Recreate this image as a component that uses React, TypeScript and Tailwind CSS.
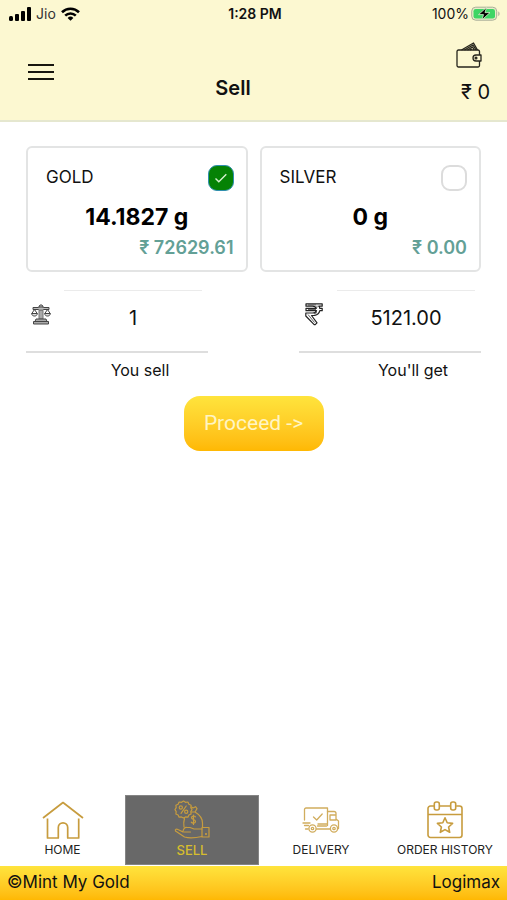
import type { ReactNode } from 'react';
import { useState } from 'react';

function SignalIcon() {
  return (
    <svg width="22" height="14" viewBox="0 0 22 14" aria-hidden="true">
      <rect x="0" y="9" width="4" height="5" rx="1.500" />
      <rect x="6" y="7" width="4" height="7" rx="1" />
      <rect x="12" y="4" width="4" height="10" rx="1" />
      <rect x="18" y="0" width="4" height="14" rx="1" />
    </svg>
  );
}

function WifiIcon() {
  return (
    <svg width="19" height="14" viewBox="0 0 19 14" fill="none" stroke="#000" strokeWidth="2.6" aria-hidden="true">
      <path d="M1 5.2a12.2 12.2 0 0 1 17 0" />
      <path d="M4.2 8.6a7.6 7.6 0 0 1 10.6 0" />
      <path d="M9.500 13.800l-2.900-2.900a4.200 4.200 0 0 1 5.800 0z" fill="#000" stroke="none" />
    </svg>
  );
}

function BatteryIcon() {
  return (
    <svg width="30" height="16" viewBox="0 0 30 16" aria-hidden="true">
      <rect x="0.700" y="1.200" width="25" height="13" rx="4" fill="#e9edc8" stroke="#a9ad98" />
      <rect x="2.500" y="3" width="21.500" height="9.500" rx="2.200" fill="#3ed565" />
      <path d="M27.300 5.600c1.600.5 1.600 4 0 4.500z" fill="#a9ad98" />
      <path d="M15.500 1.500L7.500 8.600h5l-1.500 5.200 8-7.200h-5z" fill="#000" stroke="#d9f5cf" strokeWidth="0.800" />
    </svg>
  );
}

function WalletIcon() {
  return (
    <svg width="26" height="27" viewBox="0 0 26 27" fill="none" stroke="#26251c" strokeWidth="1.300" strokeLinejoin="round" aria-hidden="true">
      <path d="M23.500 13V9.500a1.500 1.500 0 0 0-1.500-1.500H2.500A1.500 1.500 0 0 0 1 9.500v14A1.500 1.500 0 0 0 2.500 25H22a1.500 1.500 0 0 0 1.500-1.500V19" />
      <path d="M25 13h-5a3 3 0 0 0 0 6h5z" />
      <circle cx="20" cy="16" r="0.900" />
      <path d="M5.500 8L17.500 1l4 7M8.500 8l8.500-5 3 5M11.500 8l5-3 1.700 3M14 8l2-1" />
    </svg>
  );
}

function ScalesIcon() {
  return (
    <svg width="20" height="21" viewBox="0 0 20 21" fill="none" stroke="#444" strokeWidth="1" strokeLinejoin="round" aria-hidden="true">
      <path d="M8 3.500V2l2-1.300L12 2v1.500M2 3.500h5.500l1-.5h3l1 .5H18v2h-5.500l-.5.800H8l-.5-.800H2z" fill="#bbb" />
      <path d="M8 6.300h4V15H8z" fill="#aaa" stroke="#777" />
      <path d="M3.500 5.500L.8 9.500h5.400zM16.500 5.500l-2.700 4h5.400z" />
      <path d="M.7 9.500h5.600c0 3.400-5.600 3.400-5.600 0zM13.700 9.500h5.600c0 3.400-5.600 3.400-5.600 0z" fill="#ddd" />
      <path d="M5 15h10l1 2.500H4zM2.500 17.500h15V20h-15z" fill="#aaa" />
    </svg>
  );
}

function RupeeIcon() {
  return (
    <svg width="20" height="23" viewBox="0 0 20 23" fill="none" stroke="#222" strokeWidth="1.200" strokeLinejoin="round" aria-hidden="true">
      <path d="M2 .8H18.200v2.400h-3.500c.6.600 1 1.400 1.100 2.100h2.400v2.400h-2.400c-.5 2.500-2.300 4.200-5 4.600l-3.300.2 5.500 7.300-1.800 1.900h-1L1.800 13v-3H8.500c2 0 3.400-.8 4-2.300H2V5.300h10.300c-.5-1.400-1.800-2.100-3.800-2.100H2z" />
      <path d="M4 2h8M4 6.500h8M13 2.500v2M4 11.500l6.500 8M10 11l3-1.500" strokeWidth="0.700" />
    </svg>
  );
}

function HomeIcon() {
  return (
    <svg width="42" height="38" viewBox="0 0 42 38" fill="none" stroke="#c79c3e" strokeWidth="1.700" strokeLinejoin="round" aria-hidden="true">
      <path d="M1 17L21 1.500 41 17" />
      <path d="M5.500 17.500V37h10.800V26.500a4.700 4.700 0 0 1 9.400 0V37h11V17.500" />
    </svg>
  );
}

function SellIcon() {
  return (
    <svg width="36" height="40" viewBox="0 0 36 40" fill="none" stroke="#c79c3e" strokeWidth="1.200" strokeLinejoin="round" strokeLinecap="round" aria-hidden="true">
      <path d="M9.500 1l2 1.300 2.400-.3 1 2.200 2.200 1-.3 2.400L18 9.600l-1.200 2 .3 2.400-2.200 1-1 2.200-2.400-.3-2 1.200-2-1.200-2.400.3-1-2.200-2.200-1 .3-2.400L1 9.600l1.200-2-.3-2.400 2.200-1 1-2.200 2.400.3z" />
      <circle cx="6.800" cy="7.500" r="1.600" />
      <circle cx="12.200" cy="11.800" r="1.600" />
      <path d="M12.200 6l-5.200 7.300" />
      <path d="M17.500 7l1.500 1 2.500-1.300 1.500 2-2 3.300h-3.500M21 12c5 3 7.500 6.500 7.500 11v4M10.500 18.500c-1 3-1 5.500-.5 8.500" />
      <path d="M21.500 16.800c-1-1.300-4-1-4 1s4 1.500 4 3.600-3.200 2.300-4.200.8M19.500 15v9.500" />
      <path d="M28 29h-8l-4-1.500h-3c-2.500-.5-4 2-4 4.500l-5-2.500c-1.500-.8-3.200-.5-2.500 1.500L10.500 37c3.500 1 10.500 1 17.500-.5" />
      <path d="M10 32h6.500M28 27.500h7V37h-7z" />
      <circle cx="32" cy="34" r="0.500" />
    </svg>
  );
}

function DeliveryIcon() {
  return (
    <svg width="38" height="26" viewBox="0 0 38 26" fill="none" stroke="#d1ad5e" strokeWidth="1.300" strokeLinejoin="round" strokeLinecap="round" aria-hidden="true">
      <path d="M2.500 13V2.500A1.500 1.500 0 0 1 4 1h21.500v14" />
      <path d="M11.500 10l3.200 3 5.500-6" />
      <path d="M25.500 4.500H32a2 2 0 0 1 2 2v5.500l2.500 2v7.500h-1M28 8h6v5h-6zM25.500 15v3.500" />
      <path d="M1 16h7M2.500 18.500h4M3.500 22H6M14.500 22H28M15.500 19h9M16 17h9" />
      <circle cx="10.500" cy="21.500" r="3.600" />
      <circle cx="10.500" cy="21.500" r="1.200" />
      <circle cx="32" cy="21.500" r="3.600" />
      <circle cx="32" cy="21.500" r="1.200" />
    </svg>
  );
}

function OrderIcon() {
  return (
    <svg width="36" height="38" viewBox="0 0 36 38" fill="none" stroke="#c79c3e" strokeWidth="1.600" strokeLinejoin="round" aria-hidden="true">
      <path d="M7.300 5H3.500A2.500 2.500 0 0 0 1 7.500V34a2.500 2.500 0 0 0 2.500 2.500h29A2.500 2.500 0 0 0 35 34V7.500A2.500 2.500 0 0 0 32.500 5h-3.300M12.300 5h11.400M1 13.500h34" />
      <rect x="7.300" y="1" width="5" height="8" rx="2" />
      <rect x="23.700" y="1" width="5" height="8" rx="2" />
      <path d="M18 16.800l2.200 5 5.400.6-4 3.600 1.100 5.300-4.700-2.700-4.700 2.700 1.100-5.300-4-3.600 5.400-.6z" />
    </svg>
  );
}

type MetalCardProps = {
  id: string;
  name: string;
  weight: string;
  value: string;
  checked: boolean;
  onSelect: () => void;
};

function MetalCard({ id, name, weight, value, checked, onSelect }: MetalCardProps) {
  return (
    <section className="h-[126px] flex-1 rounded-md border-2 border-[#e3e4e4] pt-[17px] pr-3 pl-[18px]">
      <div className="flex items-start justify-between">
        <label htmlFor={id} className="text-[17px] leading-6">{name}</label>
        <span className="relative flex size-[26px]">
          <input
            id={id}
            type="checkbox"
            checked={checked}
            onChange={onSelect}
            className="size-[26px] appearance-none rounded-[9px] border-2 border-[#dcdcdc] bg-white checked:border checked:border-[#2f8fae] checked:bg-[#058205]"
          />
          {checked && (
            <svg className="pointer-events-none absolute inset-0" width="26" height="26" viewBox="0 0 26 26" fill="none" stroke="#d5f0d0" strokeWidth="1.400" aria-hidden="true">
              <path d="M7.500 13.500l3.300 3.300 7.500-7.600" />
            </svg>
          )}
        </span>
      </div>
      <p className="mt-3 pr-1.5 text-center text-[23px] leading-7 font-bold text-black">{weight}</p>
      <p className="mt-[5px] text-right text-lg leading-6 font-semibold text-[#63a096]">{value}</p>
    </section>
  );
}

type FieldProps = { id: string; icon: ReactNode; initial: string; label: string };

function Field({ id, icon, initial, label }: FieldProps) {
  return (
    <div className="w-2/5">
      <div className="flex border-b-2 border-[#dedede] pr-1.5">
        <span className="flex w-[38px] shrink-0 items-center pb-3 pl-[5px]">{icon}</span>
        <input
          id={id}
          defaultValue={initial}
          inputMode="decimal"
          className="h-[61px] w-full min-w-0 border-t border-[#ebebeb] pb-1.5 text-center text-xl outline-none"
        />
      </div>
      <label htmlFor={id} className="mt-[5px] block pl-[46px] text-center text-base leading-6">{label}</label>
    </div>
  );
}

type TabProps = { icon: ReactNode; label: string; active?: boolean };

function Tab({ icon, label, active = false }: TabProps) {
  return (
    <a
      href="#"
      aria-current={active ? 'page' : undefined}
      className={
        active
          ? 'flex h-[70px] flex-col items-center border border-[#858585] bg-[#686868] text-[13px] leading-5 font-medium text-[#d6bd2e]'
          : 'flex h-[70px] flex-col items-center border border-transparent text-xs leading-5 text-[#222]'
      }
    >
      <span className="flex h-12 items-center">{icon}</span>
      <span className="-mt-1 whitespace-nowrap">{label}</span>
    </a>
  );
}

export default function App() {
  const [metal, setMetal] = useState('gold');

  return (
    <div className="flex min-h-screen flex-col bg-white font-['Inter',sans-serif] text-[#111]">
      <header className="border-b-2 border-[#e5e7cf] bg-[#fcf8d1]">
        <div className="grid h-7 grid-cols-[1fr_auto_1fr] items-center pr-1.5 pl-[9px] text-sm">
          <div className="flex items-center gap-[5px]">
            <SignalIcon />
            <span className="text-[#333]">Jio</span>
            <WifiIcon />
          </div>
          <span className="text-center font-semibold">1:28 PM</span>
          <div className="flex items-center justify-end gap-0.5">
            <span>100%</span>
            <BatteryIcon />
          </div>
        </div>
        <div className="grid h-[92px] grid-cols-[1fr_auto_1fr] pr-[17px] pl-7">
          <button type="button" aria-label="Menu" className="mt-9 flex h-4 w-[26px] flex-col justify-between">
            <span className="h-0.5 w-full bg-[#17160f]" />
            <span className="h-0.5 w-full bg-[#17160f]" />
            <span className="h-0.5 w-full bg-[#17160f]" />
          </button>
          <h1 className="mt-[46px] mr-[52px] text-xl leading-7 font-semibold">Sell</h1>
          <div className="flex flex-col items-end pt-3.5">
            <button type="button" aria-label="Wallet" className="mr-2">
              <WalletIcon />
            </button>
            <span className="mt-[9px] text-xl leading-7">₹ 0</span>
          </div>
        </div>
      </header>

      <main className="flex flex-1 flex-col px-[26px] pt-6">
        <div className="flex gap-3">
          <MetalCard id="gold" name="GOLD" weight="14.1827 g" value="₹ 72629.61" checked={metal === 'gold'} onSelect={() => setMetal('gold')} />
          <MetalCard id="silver" name="SILVER" weight="0 g" value="₹ 0.00" checked={metal === 'silver'} onSelect={() => setMetal('silver')} />
        </div>
        <div className="mt-[18px] flex justify-between">
          <Field id="sell" icon={<ScalesIcon />} initial="1" label="You sell" />
          <Field id="get" icon={<RupeeIcon />} initial="5121.00" label="You'll get" />
        </div>
        <button
          type="button"
          className="mt-3.5 h-[55px] w-[140px] self-center rounded-2xl bg-linear-to-b from-[#ffe43c] to-[#ffb802] font-['Roboto',sans-serif] text-[21px] text-[#fff5c4]"
        >
          Proceed -&gt;
        </button>
      </main>

      <nav className="grid grid-cols-[125fr_134fr_124fr_124fr]">
        <Tab icon={<HomeIcon />} label="HOME" />
        <Tab icon={<SellIcon />} label="SELL" active />
        <Tab icon={<DeliveryIcon />} label="DELIVERY" />
        <Tab icon={<OrderIcon />} label="ORDER HISTORY" />
      </nav>
      <footer className="mt-px flex h-[34px] items-center justify-between bg-linear-to-b from-[#ffe43c] to-[#ffb802] px-[7px] text-[17px]">
        <span>©Mint My Gold</span>
        <span>Logimax</span>
      </footer>
    </div>
  );
}
